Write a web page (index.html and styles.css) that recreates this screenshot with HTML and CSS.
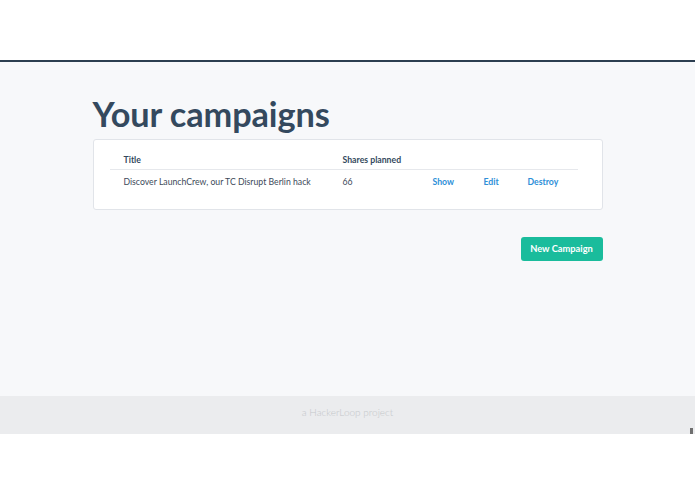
FILE: index.html
```html
<!DOCTYPE html>
<html lang="en">
<head>
<meta charset="utf-8">
<title>Your campaigns</title>
<link rel="stylesheet" href="styles.css">
</head>
<body>
  <header class="topbar"></header>
  <main class="main">
    <div class="container">
      <h1 class="page-title">Your campaigns</h1>
      <div class="card">
        <table class="campaigns">
          <thead>
            <tr>
              <th class="col-title">Title</th>
              <th class="col-shares">Shares planned</th>
              <th class="col-show"></th>
              <th class="col-edit"></th>
              <th class="col-destroy"></th>
            </tr>
          </thead>
          <tbody>
            <tr>
              <td>Discover LaunchCrew, our TC Disrupt Berlin hack</td>
              <td>66</td>
              <td><a href="#" class="action">Show</a></td>
              <td><a href="#" class="action">Edit</a></td>
              <td><a href="#" class="action">Destroy</a></td>
            </tr>
          </tbody>
        </table>
      </div>
      <div class="actions">
        <a href="#" class="btn-primary">New Campaign</a>
      </div>
    </div>
  </main>
  <footer class="footer">
    <span class="footer-text">a HackerLoop project</span>
    <span class="grip"></span>
  </footer>
</body>
</html>
```
FILE: styles.css
```css
* { box-sizing: border-box; }

html, body {
  margin: 0;
  padding: 0;
  background: #ffffff;
  font-family: Lato, "Open Sans", "Liberation Sans", sans-serif;
  color: #34495e;
}

.topbar {
  height: 62px;
  background: #ffffff;
  border-bottom: 2px solid #2c3e50;
}

.main {
  background: #f7f8fa;
  height: 334px;
  padding-top: 28px;
}

.container {
  width: 510px;
  margin: 0 auto;
}

.page-title {
  margin: 0;
  font-size: 34.3px;
  font-weight: 700;
  line-height: 48px;
  color: #34495e;
  letter-spacing: -0.1px;
}

.card {
  margin-top: 1px;
  background: #ffffff;
  border: 1px solid #e1e4e9;
  border-radius: 3px;
  padding: 10px 24px 16px 16px;
}

.campaigns {
  width: 100%;
  border-collapse: collapse;
  font-size: 8.7px;
  table-layout: fixed;
}

.campaigns th,
.campaigns td {
  text-align: left;
  padding: 0 0 0 14px;
  white-space: nowrap;
}

.campaigns th {
  font-weight: 700;
  height: 19px;
  color: #34495e;
  border-bottom: 1px solid #e6e8ec;
}

.campaigns td {
  height: 24px;
  color: #3d4a5a;
}

.col-title { width: 219px; }
.col-shares { width: 90px; }
.col-show { width: 51px; }
.col-edit { width: 44px; }
.col-destroy { width: auto; }

.action {
  color: #2e8fd8;
  font-weight: 700;
  text-decoration: none;
}

.actions {
  display: flex;
  justify-content: flex-end;
  margin-top: 27px;
}

.btn-primary {
  display: block;
  width: 82px;
  height: 24px;
  background: #1abc9c;
  color: #ffffff;
  font-size: 9.3px;
  font-weight: 700;
  line-height: 24px;
  border-radius: 3px;
  text-decoration: none;
  text-align: center;
  white-space: nowrap;
}

.footer {
  position: relative;
  height: 38px;
  background: #ebecee;
  display: flex;
  align-items: center;
  justify-content: center;
}

.footer-text {
  font-size: 10px;
  font-weight: 300;
  color: #c4c7ca;
  margin-top: -6px;
}

.grip {
  position: absolute;
  right: 2px;
  bottom: 0;
  width: 3px;
  height: 6px;
  background: #6f6f6f;
}
```
